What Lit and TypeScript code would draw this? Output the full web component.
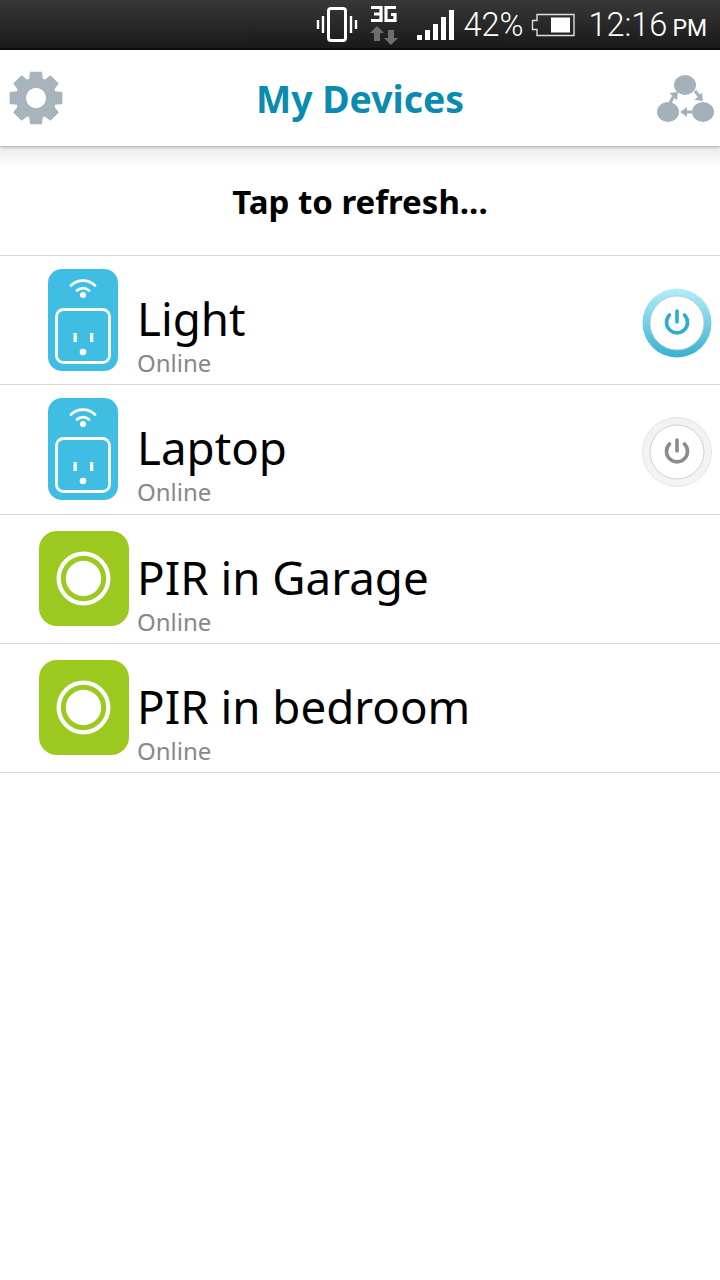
import { LitElement, html, css, svg } from "lit";
import { customElement } from "lit/decorators.js";

const plug = html`<svg class="plug" width="72" height="104" viewBox="0 0 72 104">
  <rect x="1" y="1" width="70" height="102" rx="14" fill="#3fbde3"/>
  <path d="M24 17.500a17 17 0 0 1 24 0M30 22.500a9 9 0 0 1 12 0" fill="none" stroke="#fff" stroke-width="2.800" stroke-linecap="round"/>
  <circle cx="36" cy="27" r="3" fill="#fff"/>
  <rect x="9.500" y="41.500" width="53" height="53" rx="7" fill="none" stroke="#fff" stroke-width="2.800"/>
  <rect x="26.500" y="65" width="3.300" height="9" fill="#fff"/><rect x="43" y="65" width="3.300" height="9" fill="#fff"/>
  <circle cx="36" cy="84" r="3.300" fill="#fff"/>
</svg>`;

const pir = html`<svg class="pir" width="90" height="95" viewBox="0 0 90 95">
  <rect width="90" height="95" rx="18" fill="#9bc91f"/>
  <circle cx="44.500" cy="47.500" r="27" fill="#fff"/>
  <circle cx="44.500" cy="47.500" r="22.700" fill="#9bc91f"/>
  <circle cx="44.500" cy="47.500" r="17.700" fill="#fff"/>
</svg>`;

const power = (on: boolean) => html`<svg class="power" width="70" height="70" viewBox="0 0 70 70">
  <defs><linearGradient id="g${on ? 1 : 0}" x1="0" y1="0" x2="0" y2="1">
    ${on
      ? svg`<stop offset="0" stop-color="#b5eefa"/><stop offset="1" stop-color="#36b1cf"/>`
      : svg`<stop offset="0" stop-color="#f2f2f2"/><stop offset="1" stop-color="#f4f4f4"/>`}
  </linearGradient></defs>
  <circle cx="35" cy="35" r="34.500" fill="url(#g${on ? 1 : 0})" stroke="${on ? "none" : "#e4e4e4"}"/>
  <circle cx="35" cy="35" r="27" fill="#fff" stroke="${on ? "#b9c4c8" : "#c4c4c4"}" stroke-width="0.800"/>
  <path d="M27.500 27a10.500 10.500 0 1 0 15 0" fill="none" stroke="${on ? "#2fadcd" : "#8f8a8a"}" stroke-width="3.600" stroke-linecap="round"/>
  <path d="M35 23v11" stroke="${on ? "#2fadcd" : "#8f8a8a"}" stroke-width="3.600" stroke-linecap="round"/>
</svg>`;

const gearPath = (() => {
  const cx = 28, cy = 28, teeth = 8;
  const pts: string[] = [];
  for (let i = 0; i < teeth; i++) {
    const a = (i / teeth) * Math.PI * 2 - Math.PI / 2;
    const p = (r: number, d: number) =>
      `${(cx + r * Math.cos(a + d)).toFixed(2)} ${(cy + r * Math.sin(a + d)).toFixed(2)}`;
    pts.push(p(20.5, -0.34), p(27, -0.22), p(27, 0.22), p(20.5, 0.34));
  }
  return `M${pts.join("L")}Z`;
})();

const DEVICES = [
  { name: "Light", icon: plug, on: true as boolean | null },
  { name: "Laptop", icon: plug, on: false as boolean | null },
  { name: "PIR in Garage", icon: pir, on: null },
  { name: "PIR in bedroom", icon: pir, on: null },
];

@customElement("app-root")
export class AppRoot extends LitElement {
  static styles = css`
    :host { display: block; width: 720px; height: 1280px; background: #fff; font-family: "Noto Sans", sans-serif; font-variant-ligatures: none; overflow: hidden; }
    .status { height: 46px; padding-top: 2px; background: linear-gradient(#383838, #191919); border-bottom: 2px solid #0c0c0c; display: flex; align-items: center; justify-content: flex-end; color: #fff; font-family: Roboto, sans-serif; padding-right: 13px; }
    .status svg { display: block; flex: none; }
    .pct { font-size: 32.500px; margin-left: 9px; font-weight: 300; }
    .batt { margin-left: 8px; }
    .time { font-size: 32.500px; margin-left: 13px; font-weight: 300; }
    .time small { font-size: 23px; margin-left: 5px; font-weight: 400; }
    .vib { margin-right: 12px; }
    .net { margin-right: 16px; margin-top: -1px; }
    .header { height: 96px; display: flex; align-items: center; justify-content: space-between; padding: 0 6px 0 8px; position: relative; z-index: 1; box-shadow: 0 1px 3px rgba(0,0,0,.3); background: #fff; }
    .title { color: #0a8bb0; font-size: 37.400px; font-weight: 700; }
    .refresh { height: 110px; box-sizing: border-box; padding-top: 1px; display: flex; align-items: center; justify-content: center; font-size: 33px; font-weight: 700; color: #000; background: linear-gradient(#eaeaea, #fff 22px); border-bottom: 1px solid #d8d8d8; }
    .rows { display: grid; grid-auto-rows: 129.330px; }
    .row { display: flex; align-items: center; border-bottom: 1px solid #d8d8d8; box-sizing: border-box; padding-right: 8px; }
    .slot { width: 137px; flex: none; display: flex; justify-content: center; padding-left: 29px; box-sizing: border-box; }
    .slot svg { display: block; }
    .plug { margin-top: -1px; }
    .pir { margin-top: -1px; margin-left: 2px; }
    .text { flex: 1; align-self: flex-start; display: flex; flex-direction: column; padding-top: 36px; }
    .name { font-size: 45.700px; line-height: 52px; color: #000; }
    .sub { font-size: 24px; line-height: 28px; color: #888; margin-top: 5px; }
    .power { display: block; margin-top: 5px; }
  `;

  render() {
    return html`
      <div class="status">
        <svg class="vib" width="42" height="38" viewBox="0 0 42 38">
          <rect x="12.500" y="2.500" width="17" height="32" rx="2.500" fill="none" stroke="#fff" stroke-width="3"/>
          <path d="M7 10v17M2 14v9M35 10v17M40 14v9" stroke="#fff" stroke-width="2.400"/>
        </svg>
        <svg class="net" width="30" height="42" viewBox="0 0 30 42">
          <path d="M1 3.500h10v13H1M4 10h7M26 3.500H16v13h9v-6h-4" fill="none" stroke="#fff" stroke-width="3.200"/>
          <path d="M7 22l7 7h-4v8H4v-8H0zM21 41l-7-7h4v-8h6v8h4z" fill="#6e6e6e"/>
        </svg>
        <svg width="38" height="32" viewBox="0 0 38 32">
          <rect x="1" y="26" width="5" height="5" fill="#fff"/><rect x="9" y="21" width="5" height="10" fill="#fff"/>
          <rect x="17" y="15" width="5" height="16" fill="#fff"/><rect x="25" y="8" width="5" height="23" fill="#fff"/>
          <rect x="33" y="1" width="5" height="30" fill="#fff"/>
        </svg>
        <span class="pct">42%</span>
        <svg class="batt" width="44" height="24" viewBox="0 0 44 24">
          <path d="M6 1.500h37v21H6v-6H1.500V7.500H6z" fill="none" stroke="#ddd" stroke-width="1.400"/>
          <rect x="20" y="4.500" width="19" height="15" fill="#fff"/>
        </svg>
        <span class="time">12:16<small>PM</small></span>
      </div>
      <div class="header">
        <svg width="56" height="56" viewBox="0 0 56 56"><path fill-rule="evenodd" fill="#a7b4bc" d="${gearPath} M28 18a10 10 0 1 0 .01 0Z"/></svg>
        <div class="title">My Devices</div>
        <svg width="58" height="48" viewBox="0 0 58 48">
          <g fill="#a3b1ba">
            <ellipse cx="29" cy="11" rx="11" ry="10"/><ellipse cx="12" cy="38" rx="11" ry="10"/><ellipse cx="47" cy="38" rx="11" ry="10"/>
            <path d="M22 18L13.500 19 21 26.500zM47 27L46 18.500 38.500 26zM24 38L31 33V43z"/>
          </g>
          <path d="M14 29l3.500-6.500M39 17l4 5M30 38h6" stroke="#a3b1ba" stroke-width="3" fill="none"/>
        </svg>
      </div>
      <div class="refresh">Tap to refresh...</div>
      <div class="rows">
        ${DEVICES.map(d => html`
          <div class="row">
            <div class="slot">${d.icon}</div>
            <div class="text">
              <div class="name">${d.name}</div>
              <div class="sub">Online</div>
            </div>
            ${d.on === null ? "" : power(d.on)}
          </div>`)}
      </div>
    `;
  }
}
